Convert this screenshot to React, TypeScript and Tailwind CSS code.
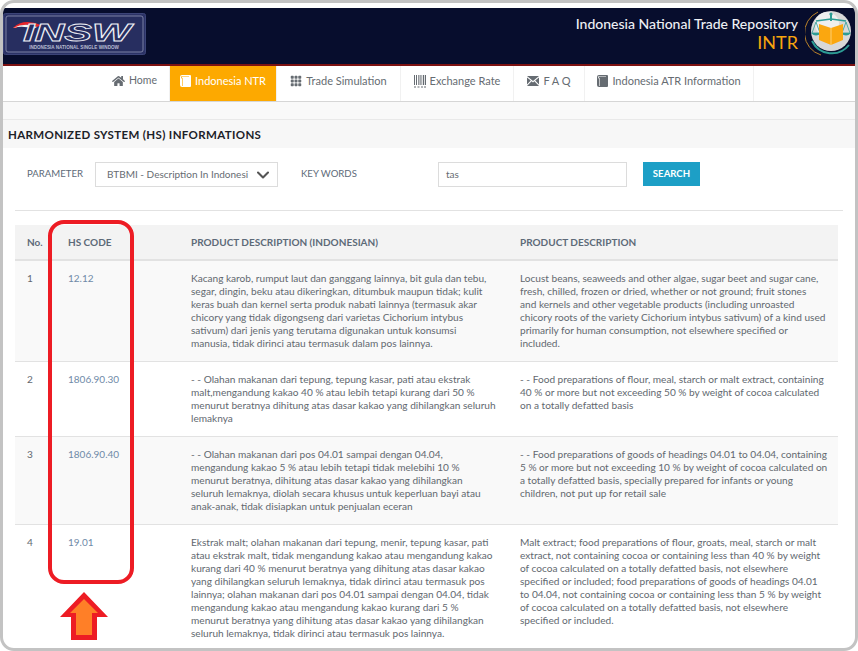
import React from 'react';
import { FaHome } from 'react-icons/fa';
import { BsGrid3X3GapFill } from 'react-icons/bs';
import { ChevronDown } from 'lucide-react';

// glyphs of the nav bar, nothing in the icon packages has quite this shape
const BookIcon = () => (
  <svg viewBox="0 0 11 12" className="h-[12px] w-[11px]" fill="currentColor">
    <path d="M2 0 H10 Q11 0 11 1 V11 Q11 12 10 12 H2 Q0 12 0 10 V2 Q0 0 2 0 Z M2 1 Q1 1 1 2.5 Q1 3.5 2 3.5 V11 H2.6 V3 Q1.7 3 1.7 2.2 Q1.7 1.6 2.6 1.6 H9 V1 Z" fillRule="evenodd" />
  </svg>
);

const BarcodeIcon = () => (
  <svg viewBox="0 0 12 13" className="h-[13px] w-[12px]" fill="currentColor">
    <path d="M0 0 H1 V10 H0 Z M2 0 H3 V10 H2 Z M4 0 H4.7 V10 H4 Z M5.6 0 H6.6 V10 H5.6 Z M7.5 0 H8.2 V10 H7.5 Z M9 0 H10 V10 H9 Z M10.8 0 H12 V10 H10.8 Z M0 11.5 H2 V12.5 H0 Z M3.5 11.5 H5.5 V12.5 H3.5 Z M7 11.5 H9 V12.5 H7 Z M10 11.5 H12 V12.5 H10 Z" />
  </svg>
);

const MailIcon = () => (
  <svg viewBox="0 0 12 10" className="h-[10px] w-[12px]" fill="currentColor">
    <path d="M0 0 H12 L6 5 Z M0 1.4 L3.8 4.6 L0 8.4 Z M12 1.4 L8.2 4.6 L12 8.4 Z M4.6 5.3 L6 6.5 L7.4 5.3 L12 10 H0 Z" />
  </svg>
);

const NAV = [
  { label: 'Home', icon: <FaHome className="h-[12px] w-[13px]" />, width: 'w-[70px] text-[10.5px]', active: false },
  { label: 'Indonesia NTR', icon: <BookIcon />, width: 'w-[107px] text-[11px]', active: true },
  { label: 'Trade Simulation', icon: <BsGrid3X3GapFill className="h-[12px] w-[12px]" />, width: 'w-[124px] text-[11px]', active: false },
  { label: 'Exchange Rate', icon: <BarcodeIcon />, width: 'w-[113px] text-[11px]', active: false },
  { label: 'F A Q', icon: <MailIcon />, width: 'w-[71px] text-[11px]', active: false },
  { label: 'Indonesia ATR Information', icon: <BookIcon />, width: 'w-[169px] text-[11px]', active: false },
];

const ROWS = [
  {
    no: '1',
    code: '12.12',
    id: 'Kacang karob, rumput laut dan ganggang lainnya, bit gula dan tebu,\nsegar, dingin, beku atau dikeringkan, ditumbuk maupun tidak; kulit\nkeras buah dan kernel serta produk nabati lainnya (termasuk akar\nchicory yang tidak digongseng dari varietas Cichorium intybus\nsativum) dari jenis yang terutama digunakan untuk konsumsi\nmanusia, tidak dirinci atau termasuk dalam pos lainnya.',
    en: 'Locust beans, seaweeds and other algae, sugar beet and sugar cane,\nfresh, chilled, frozen or dried, whether or not ground; fruit stones\nand kernels and other vegetable products (including unroasted\nchicory roots of the variety Cichorium intybus sativum) of a kind used\nprimarily for human consumption, not elsewhere specified or\nincluded.',
    height: 'h-[101px]',
  },
  {
    no: '2',
    code: '1806.90.30',
    id: '- - Olahan makanan dari tepung, tepung kasar, pati atau ekstrak\nmalt,mengandung kakao 40 % atau lebih tetapi kurang dari 50 %\nmenurut beratnya dihitung atas dasar kakao yang dihilangkan seluruh\nlemaknya',
    en: '- - Food preparations of flour, meal, starch or malt extract, containing\n40 % or more but not exceeding 50 % by weight of cocoa calculated\non a totally defatted basis',
    height: 'h-[75px]',
  },
  {
    no: '3',
    code: '1806.90.40',
    id: '- - Olahan makanan dari pos 04.01 sampai dengan 04.04,\nmengandung kakao 5 % atau lebih tetapi tidak melebihi 10 %\nmenurut beratnya, dihitung atas dasar kakao yang dihilangkan\nseluruh lemaknya, diolah secara khusus untuk keperluan bayi atau\nanak-anak, tidak disiapkan untuk penjualan eceran',
    en: '- - Food preparations of goods of headings 04.01 to 04.04, containing\n5 % or more but not exceeding 10 % by weight of cocoa calculated on\na totally defatted basis, specially prepared for infants or young\nchildren, not put up for retail sale',
    height: 'h-[88px]',
  },
  {
    no: '4',
    code: '19.01',
    id: 'Ekstrak malt; olahan makanan dari tepung, menir, tepung kasar, pati\natau ekstrak malt, tidak mengandung kakao atau mengandung kakao\nkurang dari 40 % menurut beratnya yang dihitung atas dasar kakao\nyang dihilangkan seluruh lemaknya, tidak dirinci atau termasuk pos\nlainnya; olahan makanan dari pos 04.01 sampai dengan 04.04, tidak\nmengandung kakao atau mengandung kakao kurang dari 5 %\nmenurut beratnya yang dihitung atas dasar kakao yang dihilangkan\nseluruh lemaknya, tidak dirinci atau termasuk pos lainnya.',
    en: 'Malt extract; food preparations of flour, groats, meal, starch or malt\nextract, not containing cocoa or containing less than 40 % by weight\nof cocoa calculated on a totally defatted basis, not elsewhere\nspecified or included; food preparations of goods of headings 04.01\nto 04.04, not containing cocoa or containing less than 5 % by weight\nof cocoa calculated on a totally defatted basis, not elsewhere\nspecified or included.',
    height: 'h-[125px]',
  },
];

// INSW badge, the lettering stays real text
const InswLogo = () => (
  <svg viewBox="0 0 143 42" className="h-[42px] w-[143px]">
    <rect x="0.5" y="0.5" width="142" height="41" rx="2" fill="#2b3266" stroke="#3c4478" />
    <rect x="3" y="3" width="137" height="36" rx="2" fill="#272e60" stroke="#8f95b4" strokeWidth="0.8" />
    <path d="M10 15 Q20 5 38 12 L34 14 Q22 9 13 15 Z" fill="#e8262a" />
    <path d="M10 15 Q22 9 34 14 L30 16 Q20 12 10 15 Z" fill="#f4f4f4" />
    <text x="20" y="28" fontFamily="'Liberation Sans', sans-serif" fontStyle="italic" fontWeight="700" fontSize="24" textLength="108" lengthAdjust="spacingAndGlyphs" fill="#272e60" stroke="#eef0f6" strokeWidth="0.8">INSW</text>
    <text x="71" y="36" textAnchor="middle" fontFamily="'Liberation Sans', sans-serif" fontWeight="700" fontSize="4.6" fill="#b9bdd2">INDONESIA NATIONAL SINGLE WINDOW</text>
  </svg>
);

const IntrEmblem = () => (
  <svg viewBox="0 0 50 50" className="h-[50px] w-[50px]">
    <path d="M13 4 A23 23 0 0 0 16 47" fill="none" stroke="#b9822a" strokeWidth="1" />
    <path d="M7 33 A22 22 0 0 0 44 37" fill="none" stroke="#2d9c94" strokeWidth="2" />
    <circle cx="26" cy="23" r="20" fill="#d8d8d8" />
    <circle cx="22" cy="16" r="12" fill="#efefef" />
    <path d="M11 13 L26 11 L41 13" fill="none" stroke="#2d9c94" strokeWidth="1.6" />
    <path d="M26 6 V13" stroke="#2d9c94" strokeWidth="2" />
    <circle cx="26" cy="6" r="1.6" fill="#2d9c94" />
    <path d="M7 25 L11 14 L15 25 Z M37 25 L41 14 L45 25 Z" fill="none" stroke="#2d9c94" strokeWidth="0.8" />
    <path d="M6 25 H16 Q11 30 6 25 Z M36 25 H46 Q41 30 36 25 Z" fill="#2d9c94" />
    <path d="M14 16 L26 20 L38 16 V32 L26 37 L14 32 Z" fill="#fba70f" />
    <path d="M26 20 V37" stroke="#ffd98a" strokeWidth="0.8" />
  </svg>
);

export default function App() {
  return (
    <div className="relative h-[651px] w-[858px] overflow-hidden rounded-[14px] border-[3px] border-[#c3c3c3] bg-white pt-[5px] font-['Lato',sans-serif] text-[#62686f]">
      {/* Header */}
      <header className="flex h-[58px] items-start justify-between border-b-2 border-[#7c1212] bg-[#070d2d]">
        <div className="mt-[5px]"><InswLogo /></div>
        <div className="flex items-start">
          <div className="mr-[7px] mt-[8px] text-right">
            <div className="text-[14px] font-medium leading-[16px] text-[#eef0f4]">Indonesia National Trade Repository</div>
            <div className="mt-[1px] text-[18px] leading-[18px] text-[#f8a50e]">INTR</div>
          </div>
          <IntrEmblem />
        </div>
      </header>

      {/* Navigation */}
      <nav className="flex h-[36px] border-b border-[#d6d6d6] bg-white pl-[97px]">
        {NAV.map((item) => (
          <div
            key={item.label}
            className={`flex items-center justify-center gap-[4px] border-r border-[#f1f1f1] pb-[5px] ${item.width} ${
              item.active ? 'bg-[#fda900] text-white' : 'text-[#666c72]'
            }`}
          >
            {item.icon}
            <span>{item.label}</span>
          </div>
        ))}
      </nav>

      <div className="h-[18px] border-b border-[#e9e9e9] bg-[#f9f9f9]" />
      <div className="flex h-[28px] items-center bg-[#f7f7f7] pl-[5px] pt-[2px] text-[11.5px] font-bold tracking-[0.35px] text-[#1d2228]">
        HARMONIZED SYSTEM (HS) INFORMATIONS
      </div>

      {/* Search form */}
      <div className="mx-[12px] flex h-[63px] items-start border-b border-[#e2e2e2] pt-[14px] text-[9.6px] text-[#5d6a78]">
        <span className="ml-[12px] mt-[5px] w-[68px]">PARAMETER</span>
        <div className="flex h-[25px] w-[183px] items-center justify-between border border-[#dcdcdc] pl-[11px] pr-[4px] text-[10px]">
          <span className="w-[142px] overflow-hidden whitespace-nowrap text-[#666c72]">BTBMI - Description In Indonesi</span>
          <ChevronDown className="h-[20px] w-[20px] text-[#555]" strokeWidth={2.5} />
        </div>
        <span className="ml-[23px] mt-[5px] w-[137px]">KEY WORDS</span>
        <div className="flex h-[25px] w-[189px] items-center border border-[#dcdcdc] pl-[7px] text-[10px] text-[#666c72]">tas</div>
        <div className="ml-[16px] flex h-[24px] w-[57px] items-center justify-center bg-[#1d9fc6] font-bold text-white">SEARCH</div>
      </div>

      {/* Result table */}
      <table className="ml-[12px] mt-[14px] w-[823px] table-fixed border-collapse text-[10.1px] leading-[13px]">
        <colgroup>
          <col className="w-[41px]" />
          <col className="w-[123px]" />
          <col className="w-[329px]" />
          <col className="w-[330px]" />
        </colgroup>
        <thead>
          <tr className="h-[35px] border-b-2 border-[#e2e2e2] bg-[#f3f3f3] text-left text-[10px] font-bold text-[#5d6a78]">
            <th className="pl-[12px]">No.</th>
            <th className="pl-[12px]">HS CODE</th>
            <th className="pl-[12px]">PRODUCT DESCRIPTION (INDONESIAN)</th>
            <th className="pl-[12px]">PRODUCT DESCRIPTION</th>
          </tr>
        </thead>
        <tbody>
          {ROWS.map((row, i) => (
            <tr key={row.no} className={`${row.height} border-b border-[#e2e2e2] align-top ${i % 2 === 0 ? 'bg-[#f9f9f9]' : 'bg-white'}`}>
              <td className="pl-[12px] pt-[11px]">{row.no}</td>
              <td className="pl-[12px] pt-[11px] text-[10px] text-[#6f8aa8]">{row.code}</td>
              <td className="whitespace-pre pl-[12px] pt-[11px]">{row.id}</td>
              <td className="whitespace-pre pl-[12px] pt-[11px]">{row.en}</td>
            </tr>
          ))}
        </tbody>
      </table>

      {/* Annotation over the screenshot */}
      <div className="absolute left-[45px] top-[217px] h-[364px] w-[86px] rounded-[16px] border-4 border-[#ed1c24]" />
      <svg viewBox="0 0 48 48" className="absolute left-[57px] top-[589px] h-[48px] w-[48px]">
        <path d="M24 0 L48 25 H37 V48 H11 V25 H0 Z" fill="#ed1c24" />
        <path d="M24 7 L38 21 H32 V43 H16 V21 H10 Z" fill="#ff7f27" />
      </svg>
    </div>
  );
}
